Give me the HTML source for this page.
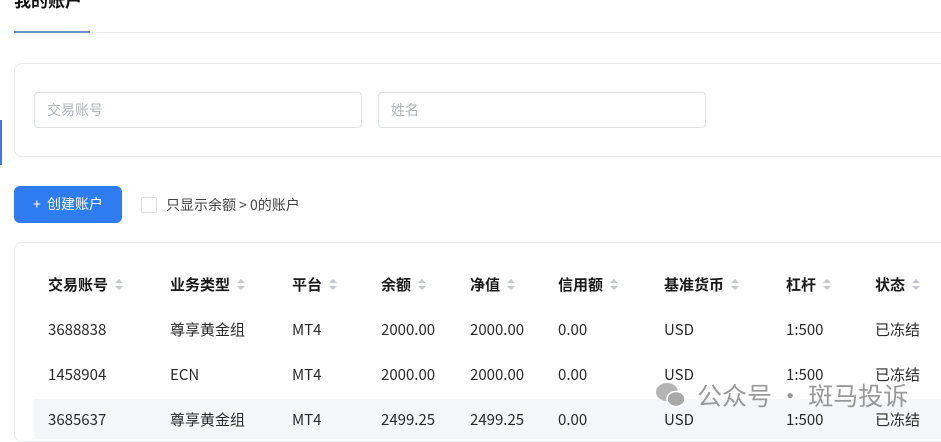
<!DOCTYPE html>
<html><head><meta charset="utf-8"><style>
*{margin:0;padding:0;box-sizing:border-box}
body{width:941px;height:433px;overflow:hidden;background:#fff;position:relative;font-family:"Noto Sans CJK SC","Liberation Sans",sans-serif;color:#222}
.a{position:absolute;white-space:nowrap;line-height:20px}
.th{font-size:15px;font-weight:bold;color:#1a1a1a;top:275px}
.td{font-size:15px;color:#2a2a2a}
.s{display:inline-block;vertical-align:middle;margin-left:7px;width:9px;height:11px;position:relative;top:-1px}
.s:before,.s:after{content:"";position:absolute;left:0;border-left:4.5px solid transparent;border-right:4.5px solid transparent}
.s:before{top:0;border-bottom:4.5px solid #c5c8ce}
.s:after{bottom:0;border-top:4.5px solid #c5c8ce}
</style></head><body>
<div class="a" style="left:14px;top:-10px;font-size:17px;font-weight:bold;color:#111">我的账户</div>
<div class="a" style="left:14px;top:32px;width:927px;height:1px;background:#eceef1"></div>
<div class="a" style="left:14px;top:31px;width:76px;height:2px;background:#6a90c4"></div>
<div class="a" style="left:0;top:120px;width:2px;height:45px;background:#3a7be0"></div>
<div class="a" style="left:14px;top:63px;width:940px;height:94px;border:1px solid #ebedf0;border-radius:8px"></div>
<div class="a" style="left:34px;top:92px;width:328px;height:36px;border:1px solid #dfe2e6;border-radius:4px"></div>
<div class="a" style="left:47px;top:100px;font-size:14px;color:#b0b3b8">交易账号</div>
<div class="a" style="left:378px;top:92px;width:328px;height:36px;border:1px solid #dfe2e6;border-radius:4px"></div>
<div class="a" style="left:391px;top:100px;font-size:14px;color:#b0b3b8">姓名</div>
<div class="a" style="left:14px;top:186px;width:108px;height:37px;background:#2f7cf0;border-radius:6px;color:#fff;font-size:14px;line-height:37px;text-align:center">+&nbsp;&nbsp;创建账户</div>
<div class="a" style="left:141px;top:197px;width:16px;height:16px;border:1px solid #dcdfe4;border-radius:2px"></div>
<div class="a" style="left:166px;top:195px;font-size:14px;color:#444">只显示余额 &gt; 0的账户</div>
<div class="a" style="left:14px;top:242px;width:940px;height:200px;border:1px solid #ebedf0;border-radius:8px"></div>
<div class="a" style="left:34px;top:399px;width:907px;height:40px;background:#f4f6f9"></div>
<div class="a th" style="left:48px">交易账号<i class="s"></i></div>
<div class="a th" style="left:170px">业务类型<i class="s"></i></div>
<div class="a th" style="left:292px">平台<i class="s"></i></div>
<div class="a th" style="left:381px">余额<i class="s"></i></div>
<div class="a th" style="left:470px">净值<i class="s"></i></div>
<div class="a th" style="left:558px">信用额<i class="s"></i></div>
<div class="a th" style="left:664px">基准货币<i class="s"></i></div>
<div class="a th" style="left:786px">杠杆<i class="s"></i></div>
<div class="a th" style="left:875px">状态<i class="s"></i></div>
<div style="position:absolute;left:0;top:320px">
<div class="a td" style="left:48px">3688838</div><div class="a td" style="left:170px">尊享黄金组</div><div class="a td" style="left:292px">MT4</div><div class="a td" style="left:381px">2000.00</div><div class="a td" style="left:470px">2000.00</div><div class="a td" style="left:558px">0.00</div><div class="a td" style="left:664px">USD</div><div class="a td" style="left:786px">1:500</div><div class="a td" style="left:875px">已冻结</div>
</div>
<div style="position:absolute;left:0;top:365px">
<div class="a td" style="left:48px">1458904</div><div class="a td" style="left:170px">ECN</div><div class="a td" style="left:292px">MT4</div><div class="a td" style="left:381px">2000.00</div><div class="a td" style="left:470px">2000.00</div><div class="a td" style="left:558px">0.00</div><div class="a td" style="left:664px">USD</div><div class="a td" style="left:786px">1:500</div><div class="a td" style="left:875px">已冻结</div>
</div>
<div style="position:absolute;left:0;top:410px">
<div class="a td" style="left:48px">3685637</div><div class="a td" style="left:170px">尊享黄金组</div><div class="a td" style="left:292px">MT4</div><div class="a td" style="left:381px">2499.25</div><div class="a td" style="left:470px">2499.25</div><div class="a td" style="left:558px">0.00</div><div class="a td" style="left:664px">USD</div><div class="a td" style="left:786px">1:500</div><div class="a td" style="left:875px">已冻结</div>
</div>
<svg class="a" style="left:654px;top:380px" width="36" height="30" viewBox="0 0 36 30"><ellipse cx="13" cy="12" rx="11" ry="9" fill="#b4b4b4"/><ellipse cx="22" cy="19" rx="9" ry="7.5" fill="#a8a8a8" stroke="#fff" stroke-width="1.5"/></svg>
<div class="a" style="left:697px;top:380px;font-size:25px;line-height:30px;color:rgba(120,120,120,.75)">公众号 · 斑马投诉</div>
</body></html>
